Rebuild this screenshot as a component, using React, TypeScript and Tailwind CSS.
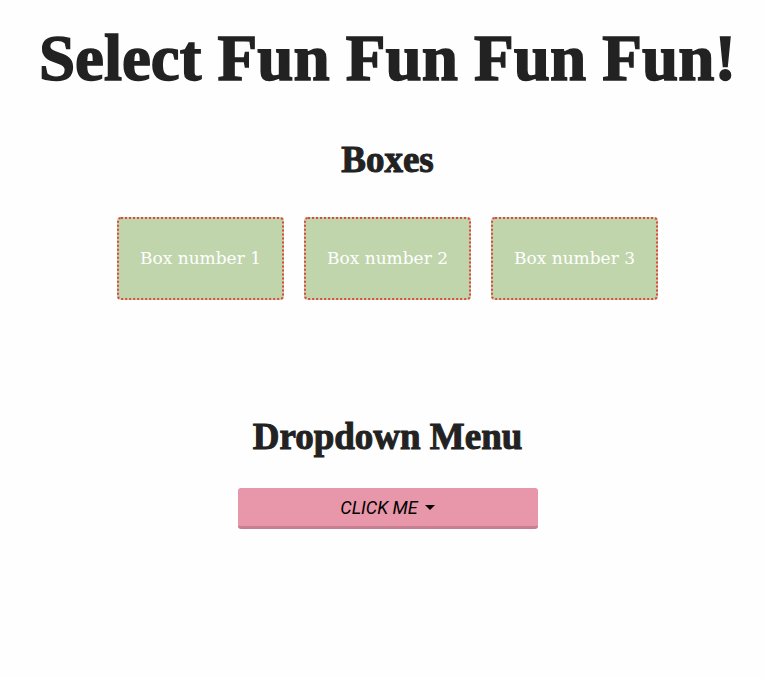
import React from "react";

function Box({ n }: { n: number }) {
  return (
    <div className="flex h-[83px] w-[167px] items-center justify-center rounded-[4px] border-2 border-dotted border-[#e0463f] bg-[#c0d5ab] pt-[1px] font-['DejaVu_Serif',serif] text-[17px] text-white">
      Box number {n}
    </div>
  );
}

export default function App() {
  return (
    <div className="min-h-[678px] w-full bg-[#fefefe] pl-[10px] text-[#222222]">
      <div className="flex flex-col items-center">
        <h1 className="mt-[26px] font-['Liberation_Serif',serif] text-[65px] font-bold leading-none [-webkit-text-stroke:1.5px_#222222]">
          Select Fun Fun Fun Fun!
        </h1>
        <h2 className="mt-[50px] font-['Liberation_Serif',serif] text-[37px] font-bold leading-none [-webkit-text-stroke:1px_#222222]">
          Boxes
        </h2>
        <div className="mt-[39px] flex gap-[20px]">
          <Box n={1} />
          <Box n={2} />
          <Box n={3} />
        </div>
        <h2 className="mt-[118px] font-['Liberation_Serif',serif] text-[37px] font-bold leading-none [-webkit-text-stroke:1px_#222222]">
          Dropdown Menu
        </h2>
        <button className="mt-[33px] flex h-[41px] w-[300px] items-center justify-center gap-[7px] rounded-[3px] border-b-[3px] border-[#c77e90] bg-[#e896a9] font-['Roboto','Liberation_Sans',sans-serif] text-[18px] italic text-black">
          <span>CLICK ME</span>
          <svg width="10" height="5" viewBox="0 0 10 5">
            <path d="M0 0 L10 0 L5 5 Z" fill="#000" />
          </svg>
        </button>
      </div>
    </div>
  );
}
